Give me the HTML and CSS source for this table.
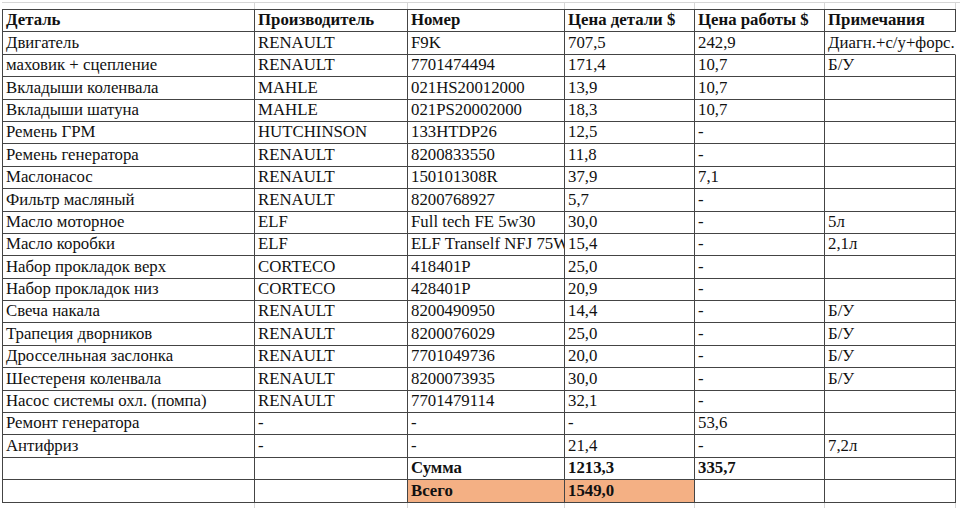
FILE: index.html
```html
<!DOCTYPE html>
<html lang="ru">
<head>
<meta charset="utf-8">
<title>Детали</title>
<link rel="stylesheet" href="styles.css">
</head>
<body>
<div class="sheet">
  <div class="ghost"><span></span><span></span><span></span><span></span><span></span><span></span></div>
  <div class="grid">
    <div class="c b">Деталь</div><div class="c b">Производитель</div><div class="c b">Номер</div><div class="c b">Цена детали $</div><div class="c b">Цена работы $</div><div class="c b">Примечания</div>
    <div class="c">Двигатель</div><div class="c">RENAULT</div><div class="c">F9K</div><div class="c">707,5</div><div class="c">242,9</div><div class="c open">Диагн.+с/у+форс.</div>
    <div class="c">маховик + сцепление</div><div class="c">RENAULT</div><div class="c">7701474494</div><div class="c">171,4</div><div class="c">10,7</div><div class="c">Б/У</div>
    <div class="c">Вкладыши коленвала</div><div class="c">MAHLE</div><div class="c">021HS20012000</div><div class="c">13,9</div><div class="c">10,7</div><div class="c"></div>
    <div class="c">Вкладыши шатуна</div><div class="c">MAHLE</div><div class="c">021PS20002000</div><div class="c">18,3</div><div class="c">10,7</div><div class="c"></div>
    <div class="c">Ремень ГРМ</div><div class="c">HUTCHINSON</div><div class="c">133HTDP26</div><div class="c">12,5</div><div class="c">-</div><div class="c"></div>
    <div class="c">Ремень генератора</div><div class="c">RENAULT</div><div class="c">8200833550</div><div class="c">11,8</div><div class="c">-</div><div class="c"></div>
    <div class="c">Маслонасос</div><div class="c">RENAULT</div><div class="c">150101308R</div><div class="c">37,9</div><div class="c">7,1</div><div class="c"></div>
    <div class="c">Фильтр масляный</div><div class="c">RENAULT</div><div class="c">8200768927</div><div class="c">5,7</div><div class="c">-</div><div class="c"></div>
    <div class="c">Масло моторное</div><div class="c">ELF</div><div class="c">Full tech FE 5w30</div><div class="c">30,0</div><div class="c">-</div><div class="c">5л</div>
    <div class="c">Масло коробки</div><div class="c">ELF</div><div class="c">ELF Tranself NFJ 75W</div><div class="c">15,4</div><div class="c">-</div><div class="c">2,1л</div>
    <div class="c">Набор прокладок верх</div><div class="c">CORTECO</div><div class="c">418401P</div><div class="c">25,0</div><div class="c">-</div><div class="c"></div>
    <div class="c">Набор прокладок низ</div><div class="c">CORTECO</div><div class="c">428401P</div><div class="c">20,9</div><div class="c">-</div><div class="c"></div>
    <div class="c">Свеча накала</div><div class="c">RENAULT</div><div class="c">8200490950</div><div class="c">14,4</div><div class="c">-</div><div class="c">Б/У</div>
    <div class="c">Трапеция дворников</div><div class="c">RENAULT</div><div class="c">8200076029</div><div class="c">25,0</div><div class="c">-</div><div class="c">Б/У</div>
    <div class="c">Дросселньная заслонка</div><div class="c">RENAULT</div><div class="c">7701049736</div><div class="c">20,0</div><div class="c">-</div><div class="c">Б/У</div>
    <div class="c">Шестереня коленвала</div><div class="c">RENAULT</div><div class="c">8200073935</div><div class="c">30,0</div><div class="c">-</div><div class="c">Б/У</div>
    <div class="c">Насос системы охл. (помпа)</div><div class="c">RENAULT</div><div class="c">7701479114</div><div class="c">32,1</div><div class="c">-</div><div class="c"></div>
    <div class="c">Ремонт генератора</div><div class="c">-</div><div class="c">-</div><div class="c">-</div><div class="c">53,6</div><div class="c"></div>
    <div class="c">Антифриз</div><div class="c">-</div><div class="c">-</div><div class="c">21,4</div><div class="c">-</div><div class="c">7,2л</div>
    <div class="c"></div><div class="c"></div><div class="c b">Сумма</div><div class="c b">1213,3</div><div class="c b">335,7</div><div class="c"></div>
    <div class="c"></div><div class="c"></div><div class="c b hl">Всего</div><div class="c b hl">1549,0</div><div class="c"></div><div class="c"></div>
  </div>
  <div class="ghost ghost-bottom"><span></span><span></span><span></span><span></span><span></span><span></span></div>
</div>
</body>
</html>
```

FILE: styles.css
```css
html, body {
  margin: 0;
  padding: 0;
  background: #ffffff;
}

body {
  font-family: "Liberation Serif", "Times New Roman", serif;
  font-size: 16.8px;
  color: #111;
}

.sheet {
  margin-left: 2px;
  padding-top: 2px;
}

.ghost {
  display: grid;
  grid-template-columns: 252px 153px 157px 130px 130px 131px;
  padding-left: 1px;
  height: 6px;
  border-top: 1px solid #d6d6d6;
}

.ghost span {
  border-right: 1px solid #d6d6d6;
}

.ghost-bottom {
  border-top: none;
  height: 8px;
}

.grid {
  display: grid;
  grid-template-columns: 252px 153px 157px 130px 130px 131px;
  grid-auto-rows: 22.4px;
  border-left: 1px solid #444;
  border-top: 1px solid #444;
  width: max-content;
}

.c {
  box-sizing: border-box;
  border-right: 1px solid #444;
  border-bottom: 1px solid #444;
  padding: 0 0 2px 3px;
  display: flex;
  align-items: flex-end;
  line-height: 19px;
  white-space: nowrap;
  overflow: hidden;
}

.c.open {
  overflow: visible;
  border-right-color: transparent;
}

.b {
  font-weight: bold;
}

.hl {
  background: #f4b084;
}
```
